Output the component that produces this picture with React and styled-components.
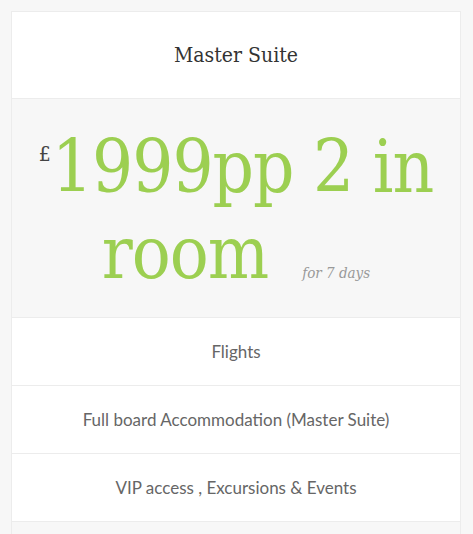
import React from 'react';
import styled, { createGlobalStyle } from 'styled-components';

const Global = createGlobalStyle`
body {
  margin: 0;
  background: #f7f7f7;
}
`;

const Page = styled.div`
padding: 11px 12px 0 11px;
`;

const Card = styled.div`
border: 1px solid #ececec;
border-bottom: none;
display: flex;
flex-direction: column;
`;

const Header = styled.div`
background: #fff;
height: 86px;
display: flex;
align-items: center;
justify-content: center;
border-bottom: 1px solid #ececec;
font-family: "DejaVu Serif Condensed", "DejaVu Serif", serif;
font-stretch: condensed;
font-size: 21px;
color: #333;
`;

const PriceBox = styled.div`
box-sizing: border-box;
background: #f7f7f7;
height: 219px;
padding-top: 4px;
border-bottom: 1px solid #ececec;
display: flex;
align-items: center;
justify-content: center;
text-align: center;
`;

const Price = styled.div`
font-family: "DejaVu Serif Condensed", "DejaVu Serif", serif;
font-stretch: condensed;
font-size: 72px;
line-height: 86px;
color: #9ccf51;
letter-spacing: -1px;
padding: 0 14px;
`;

const Currency = styled.span`
font-family: "DejaVu Serif", serif;
font-size: 21px;
line-height: 0;
color: #444;
vertical-align: top;
position: relative;
top: 30px;
margin-right: 1px;
letter-spacing: 0;
`;

const Period = styled.span`
font-family: "DejaVu Serif", serif;
font-style: italic;
font-size: 15px;
line-height: 0;
color: #999;
letter-spacing: 0;
margin-left: 34px;
`;

const Feature = styled.div`
background: #fff;
height: 67px;
border-bottom: 1px solid #ececec;
display: flex;
align-items: center;
justify-content: center;
font-family: Lato, "Open Sans", sans-serif;
font-size: 17px;
color: #666;
`;

const Footer = styled.div`
background: #f7f7f7;
height: 12px;
`;

const features = [
  'Flights',
  'Full board Accommodation (Master Suite)',
  'VIP access , Excursions & Events',
];

export default function App() {
  return (
    <Page>
      <Global />
      <Card>
        <Header>Master Suite</Header>
        <PriceBox>
          <Price>
            <Currency>£</Currency>1999pp 2 in room<Period>for 7 days</Period>
          </Price>
        </PriceBox>
        {features.map((f) => (
          <Feature key={f}>{f}</Feature>
        ))}
        <Footer />
      </Card>
    </Page>
  );
}
